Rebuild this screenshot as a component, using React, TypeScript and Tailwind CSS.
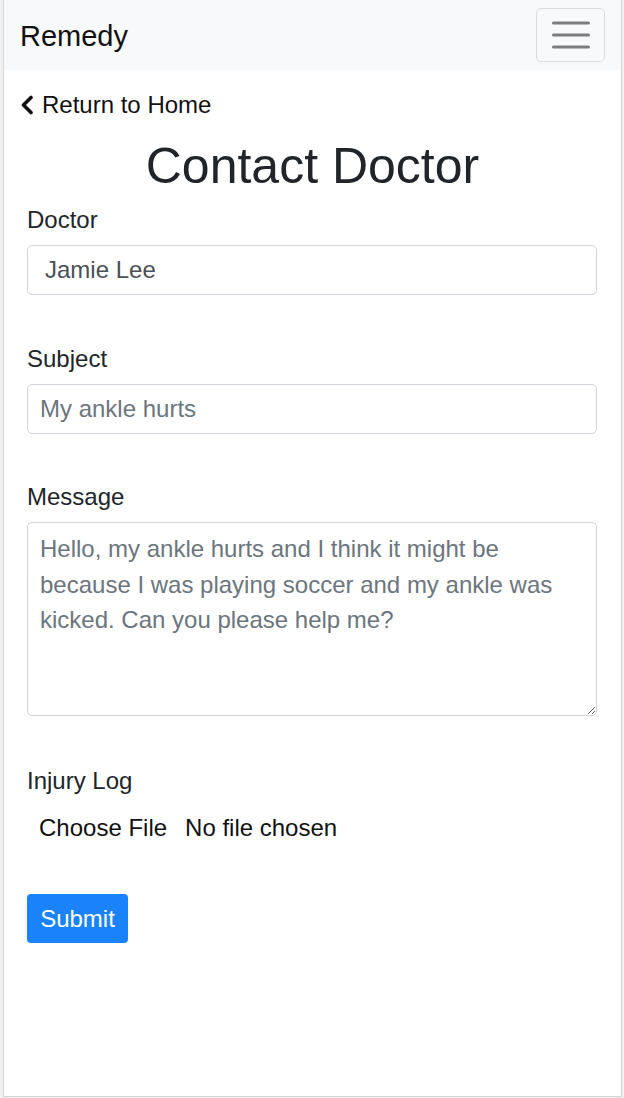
import React from 'react';

const Chevron = () => (
    <svg width="14" height="20" viewBox="0 0 14 20" className="shrink-0">
        <polyline points="11,2.5 3.5,10 11,17.5" fill="none" stroke="#111" strokeWidth="3.6" strokeLinecap="round" strokeLinejoin="round" />
    </svg>
);

const Hamburger = () => (
    <svg width="38" height="30" viewBox="0 0 38 30">
        <g stroke="#7d7d7d" strokeWidth="3" strokeLinecap="round">
            <line x1="1.5" y1="3" x2="36.5" y2="3" />
            <line x1="1.5" y1="15" x2="36.5" y2="15" />
            <line x1="1.5" y1="27" x2="36.5" y2="27" />
        </g>
    </svg>
);

export default function App() {
    return (
        <div className="h-[1098px] w-[624px] bg-[#f0f0f0] pl-[3px] pr-[2px] pb-px font-['Liberation_Sans',Arial,sans-serif]">
            <div className="h-full bg-white border-l border-r border-b border-[#d4d4d4] flex flex-col">
                {/* Navbar */}
                <nav className="h-[70px] bg-[#f8f9fa] flex items-center justify-between pl-[16px] pr-[16px]">
                    <span className="text-[29px] leading-none text-[#111] pt-[3px]">Remedy</span>
                    <button className="w-[69px] h-[54px] border border-[#dcdcdc] rounded-[5px] flex items-center justify-center">
                        <Hamburger />
                    </button>
                </nav>

                <a className="mt-[17px] h-[36px] flex items-center gap-[8px] pl-[16px] text-[24px] text-[#111]">
                    <Chevron />
                    <span>Return to Home</span>
                </a>

                <h1 className="mt-[13px] h-[60px] leading-[60px] text-center text-[50px] text-[#212529]">Contact Doctor</h1>

                <form className="px-[23px] mr-px flex flex-col text-[24px] text-[#212529]">
                    <label className="mt-[6px] h-[36px] leading-[36px]">Doctor</label>
                    <div className="mt-[7px] h-[50px] border border-[#ced4da] rounded-[5px] flex items-center pl-[17px] text-[#495057]">
                        Jamie Lee
                    </div>

                    <label className="mt-[46px] h-[36px] leading-[36px]">Subject</label>
                    <input
                        readOnly
                        placeholder="My ankle hurts"
                        className="mt-[7px] h-[50px] border border-[#ced4da] rounded-[5px] px-[12px] text-[#495057] placeholder:text-[#6c757d] outline-none"
                    />

                    <label className="mt-[45px] h-[36px] leading-[36px]">Message</label>
                    <textarea
                        readOnly
                        placeholder="Hello, my ankle hurts and I think it might be because I was playing soccer and my ankle was kicked. Can you please help me?"
                        className="mt-[7px] h-[194px] border border-[#ced4da] rounded-[5px] px-[12px] pt-[8px] leading-[35.5px] text-[#495057] placeholder:text-[#6c757d] outline-none resize-y"
                    />

                    <label className="mt-[47px] h-[36px] leading-[36px]">Injury Log</label>
                    <div className="mt-[11px] h-[36px] flex items-center pl-[12px] text-[#111]">
                        <span>Choose File</span>
                        <span className="ml-[18px]">No file chosen</span>
                    </div>

                    <div className="mt-[48px]">
                        <button type="button" className="h-[49px] w-[101px] rounded-[4px] bg-[#1a82fb] text-white text-[24px]">
                            Submit
                        </button>
                    </div>
                </form>
            </div>
        </div>
    );
}
